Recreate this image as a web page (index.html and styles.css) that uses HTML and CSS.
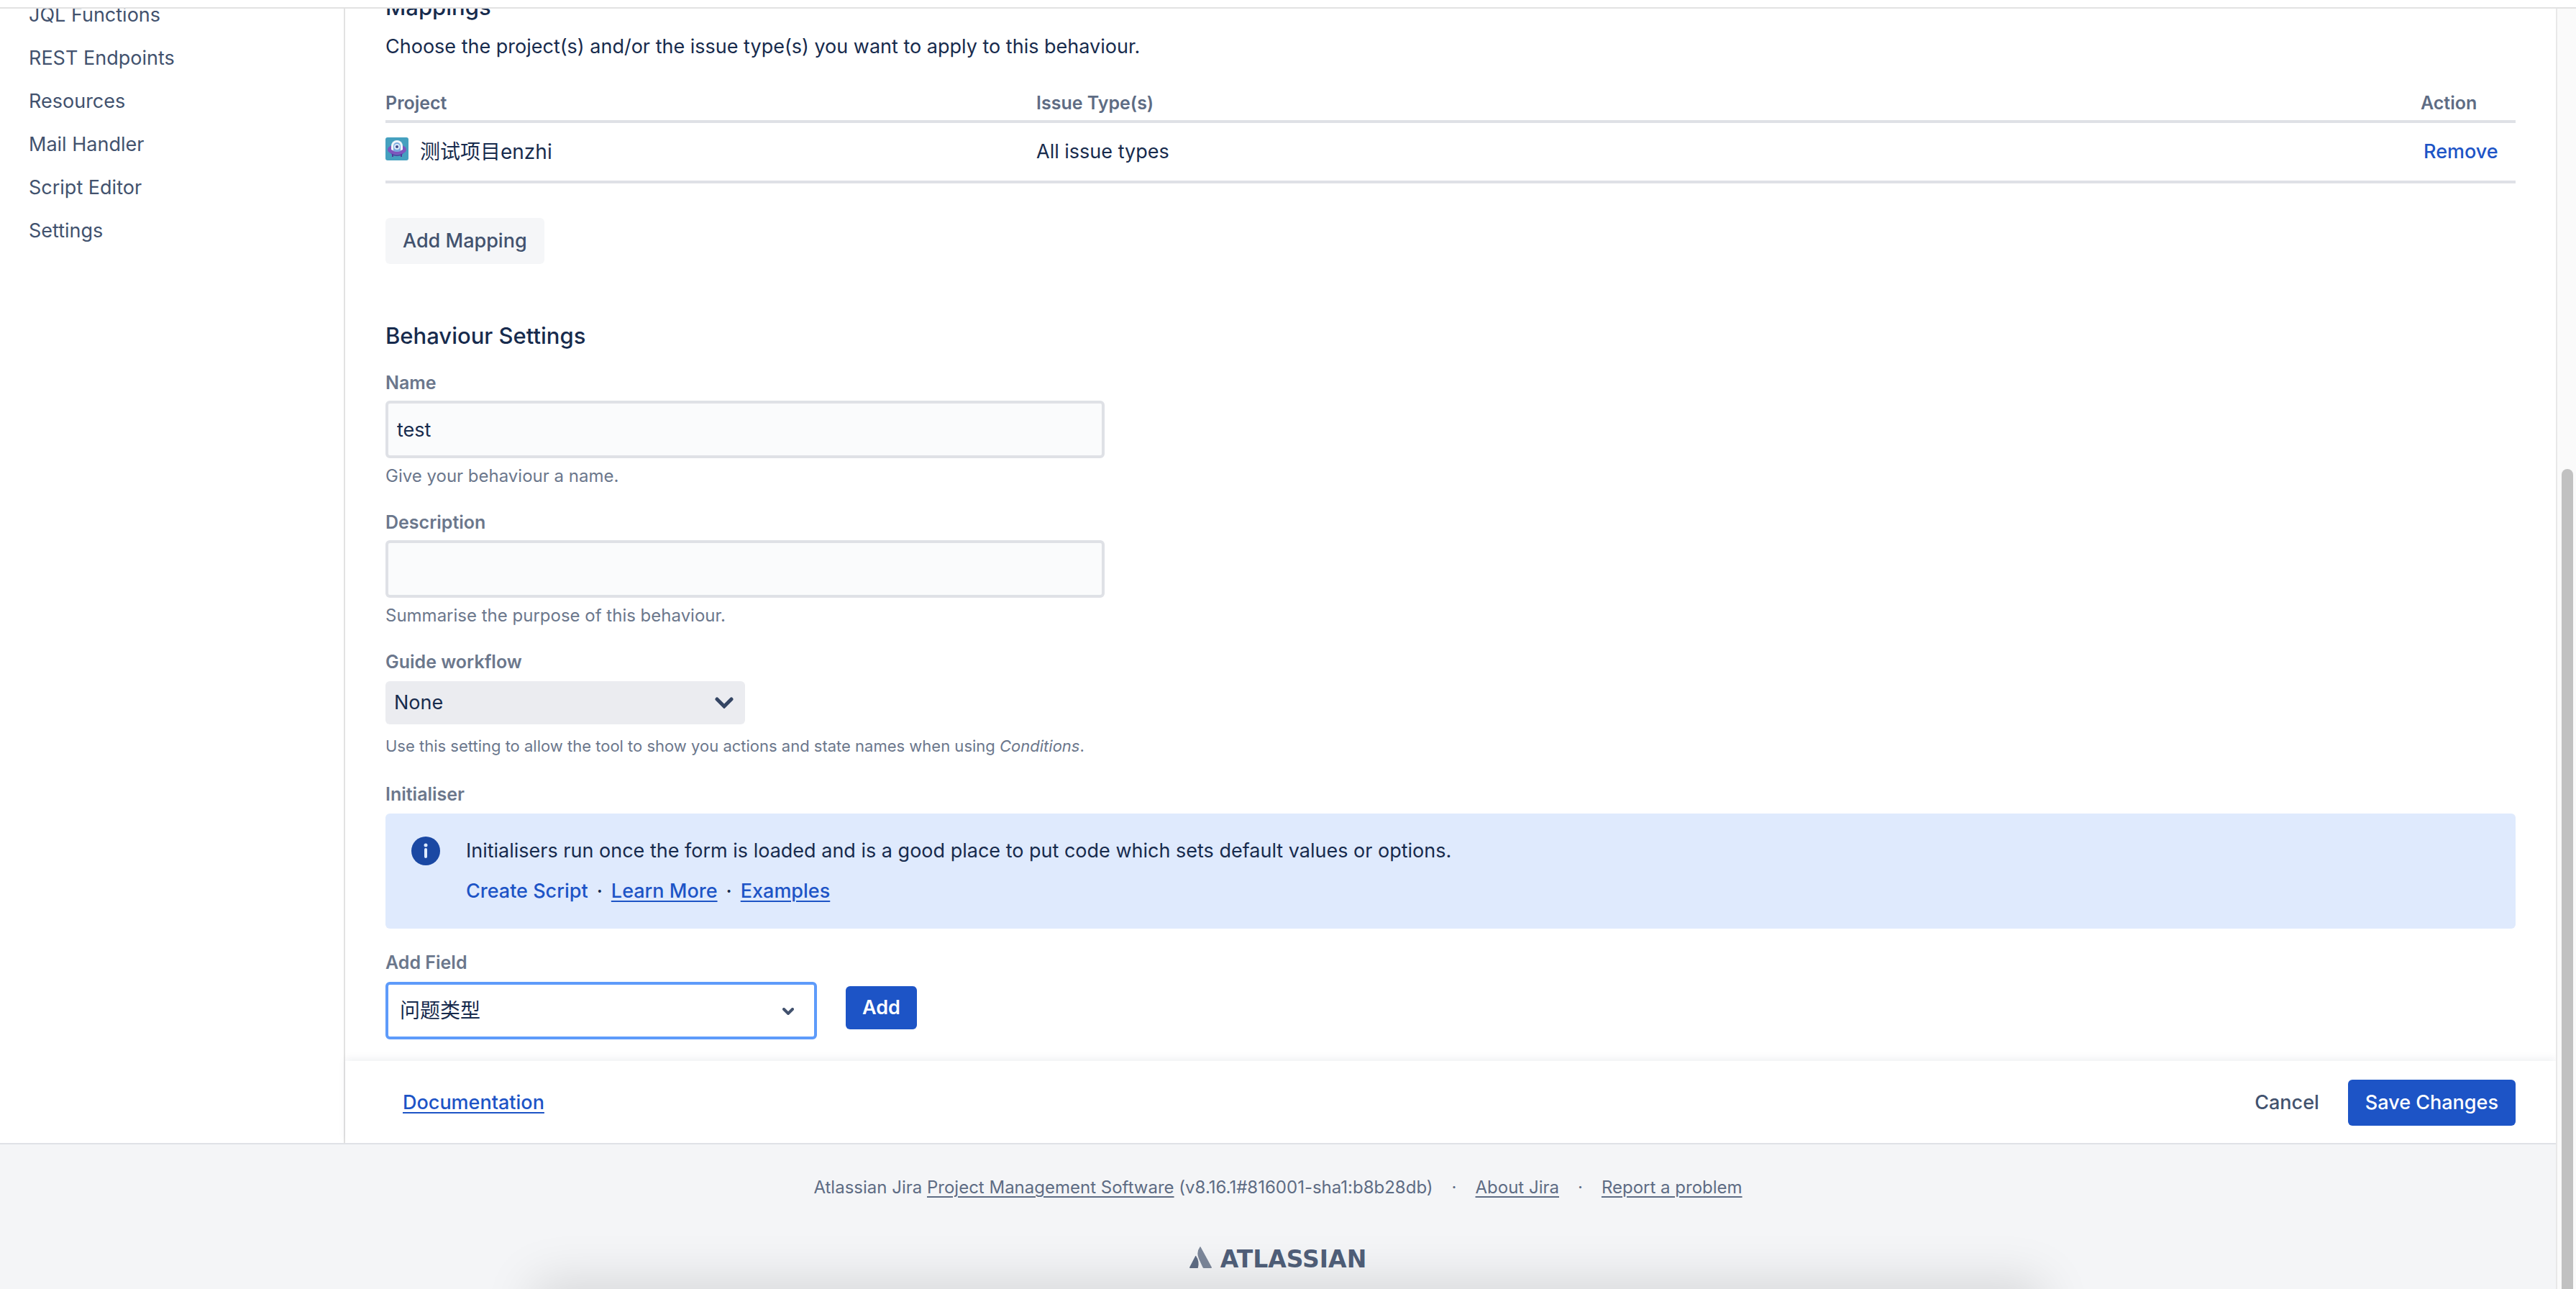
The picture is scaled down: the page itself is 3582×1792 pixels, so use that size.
FILE: index.html
```html
<!DOCTYPE html>
<html lang="en">
<head>
    <meta charset="UTF-8">
    <meta name="viewport" content="width=device-width, initial-scale=1.0">
    <title>Edit Behaviour</title>
    <link rel="stylesheet" href="styles.css">
</head>
<body>
    <div class="topbar"></div>
    <div class="window">
        <div class="page">
            <div class="columns">
                <nav class="sidebar">
                    <a href="#">JQL Functions</a>
                    <a href="#">REST Endpoints</a>
                    <a href="#">Resources</a>
                    <a href="#">Mail Handler</a>
                    <a href="#">Script Editor</a>
                    <a href="#">Settings</a>
                </nav>

                <main class="main">
                    <form class="content" id="behaviour">
                        <h2 class="mappings-title">Mappings</h2>
                        <p class="intro">Choose the project(s) and/or the issue type(s) you want to apply to this behaviour.</p>

                        <table class="mappings">
                            <thead>
                                <tr>
                                    <th class="col-project">Project</th>
                                    <th>Issue Type(s)</th>
                                    <th class="col-action">Action</th>
                                </tr>
                            </thead>
                            <tbody>
                                <tr>
                                    <td>
                                        <div class="project">
                                            <svg class="avatar" viewBox="0 0 32 32">
                                                <rect width="32" height="32" rx="3" fill="#45a0bf"/>
                                                <path d="M10 22v5M22 22v5" stroke="#50389a" stroke-width="2"/>
                                                <path d="M6 20q10 9 20 0l-3 4q-7 4-14 0z" fill="#50389a"/>
                                                <ellipse cx="16" cy="17" rx="13" ry="7" fill="#7e55bd"/>
                                                <path d="M8 17V12a8 8 0 0 1 16 0v5q-8 5-16 0z" fill="#f1f5fa"/>
                                                <path d="M11 19v-7a5 5 0 0 1 10 0v7q-5 2-10 0z" fill="#7aabdf"/>
                                                <circle cx="16" cy="13" r="4" fill="#dcebfa"/>
                                                <circle cx="16" cy="13" r="2" fill="#3f4a8a"/>
                                            </svg>
                                            <span>测试项目enzhi</span>
                                        </div>
                                    </td>
                                    <td>All issue types</td>
                                    <td class="col-action"><button type="button" class="link-btn">Remove</button></td>
                                </tr>
                            </tbody>
                        </table>

                        <button type="button" class="btn">Add Mapping</button>

                        <h2 class="settings-title">Behaviour Settings</h2>

                        <div class="field">
                            <label for="name">Name</label>
                            <input type="text" id="name" value="test">
                            <p class="help">Give your behaviour a name.</p>
                        </div>
                        <div class="field">
                            <label for="description">Description</label>
                            <input type="text" id="description">
                            <p class="help">Summarise the purpose of this behaviour.</p>
                        </div>
                        <div class="field">
                            <label for="workflow">Guide workflow</label>
                            <div class="select workflow">
                                <select id="workflow"><option>None</option></select>
                                <svg class="arrow" viewBox="0 0 26 16"><path d="M3 3l10 10L23 3" fill="none" stroke="#344563" stroke-width="5" stroke-linecap="round"/></svg>
                            </div>
                            <p class="help small">Use this setting to allow the tool to show you actions and state names when using <em>Conditions</em>.</p>
                        </div>
                        <div class="field">
                            <h3 class="label">Initialiser</h3>
                            <div class="info">
                                <svg class="info-icon" viewBox="0 0 40 40">
                                    <circle cx="20" cy="20" r="20" fill="#1a48a3"/>
                                    <circle cx="20" cy="12" r="2.500" fill="#deebff"/>
                                    <path d="M20 18v10" stroke="#deebff" stroke-width="4" stroke-linecap="round"/>
                                </svg>
                                <div>
                                    <p>Initialisers run once the form is loaded and is a good place to put code which sets default values or options.</p>
                                    <p class="info-links">
                                        <button type="button" class="link-btn">Create Script</button>
                                        <span>·</span>
                                        <a href="#">Learn More</a>
                                        <span>·</span>
                                        <a href="#">Examples</a>
                                    </p>
                                </div>
                            </div>
                        </div>
                        <div class="field">
                            <label for="add-field">Add Field</label>
                            <div class="add-row">
                                <div class="select picker">
                                    <select id="add-field"><option>问题类型</option></select>
                                    <svg class="arrow" viewBox="0 0 16 10"><path d="M2 2l6 6 6-6" fill="none" stroke="#42526e" stroke-width="4" stroke-linecap="round"/></svg>
                                </div>
                                <button type="button" class="btn primary add">Add</button>
                            </div>
                        </div>
                    </form>

                    <div class="actions">
                        <a href="#">Documentation</a>
                        <div class="actions-right">
                            <button type="button" class="btn plain">Cancel</button>
                            <button type="submit" form="behaviour" class="btn primary">Save Changes</button>
                        </div>
                    </div>
                </main>
            </div>

            <footer class="footer">
                <ul class="footer-links">
                    <li>Atlassian Jira <a href="#">Project Management Software</a> (v8.16.1#816001-sha1:b8b28db)</li>
                    <li>·</li>
                    <li><a href="#">About Jira</a></li>
                    <li>·</li>
                    <li><a href="#">Report a problem</a></li>
                </ul>
                <div class="logo">
                    <svg class="logo-mark" viewBox="0 0 31 30">
                        <path d="M9 13Q14 20 12 29q0 1-1 1H1q-1 0-1-1L8 13.500q.5-1 1-.5z" fill="#5e6c84"/>
                        <path d="M14.500.5q.5-1 1 0L31 29q0 1-1 1H20q-1 0-1.500-1L13 17Q9 8 14.500.5z" fill="#7c879a"/>
                    </svg>
                    <span>ATLASSIAN</span>
                </div>
            </footer>
        </div>

        <div class="scroll-track">
            <div class="scroll-thumb"></div>
        </div>
    </div>
    <div class="dock-shadow"></div>
</body>
</html>
```

FILE: styles.css
```css
* {
    box-sizing: border-box;
}
body {
    margin: 0;
    height: 100vh;
    display: flex;
    flex-direction: column;
    overflow: hidden;
    position: relative;
    background: white;
    color: #172b4d;
    font-family: Inter, "Noto Sans CJK SC", sans-serif;
    font-size: 27px;
    line-height: 40px;
}
h2, h3, p, ul {
    margin: 0;
    padding: 0;
}
a {
    color: #1d54c6;
    text-underline-offset: 4px;
    text-decoration-thickness: 2px;
}
button, input, select {
    font: inherit;
    color: inherit;
    margin: 0;
}
.topbar {
    flex: none;
    height: 12px;
    background: white;
    border-bottom: 2px solid #e2e2e2;
}
.window {
    flex: 1;
    min-height: 0;
    display: flex;
    overflow: hidden;
}
.page {
    flex: 1;
    display: flex;
    flex-direction: column;
}
.columns {
    flex: none;
    display: flex;
}
.sidebar {
    width: 480px;
    flex: none;
    display: flex;
    flex-direction: column;
    gap: 20px;
    margin-top: -11px;
    padding: 0 40px;
    border-right: 2px solid #e2e2e2;
}
.sidebar a {
    color: #42526e;
    text-decoration: none;
}
.main {
    flex: 1;
    min-width: 0;
}
.content {
    padding: 0 56px;
}
h2 {
    font-size: 31px;
    font-weight: 500;
}
.mappings-title {
    margin-top: -22px;
}
.intro {
    margin-top: 15px;
}
.mappings {
    width: 100%;
    margin-top: 38px;
    border-spacing: 0;
    text-align: left;
}
.mappings th {
    padding: 0 0 4px;
    font-size: 25px;
    font-weight: 600;
    color: #5e6c84;
    border-bottom: 4px solid #dfe1e6;
}
.mappings td {
    padding: 20px 0;
    border-bottom: 4px solid #dfe1e6;
}
.col-project {
    width: 905px;
}
.mappings .col-action {
    width: 132px;
}
.project {
    display: flex;
    gap: 16px;
    font-size: 28px;
}
.avatar {
    width: 32px;
    height: 32px;
}
.link-btn {
    padding: 0;
    border: 0;
    background: none;
    color: #1d54c6;
    font-weight: 500;
}
td .link-btn {
    padding: 0 4px;
}
.btn {
    padding: 12px 24px;
    border: 0;
    border-radius: 6px;
    background: #f5f6f8;
    color: #42526e;
    font-weight: 500;
}
.btn.primary {
    background: #1d54c6;
    color: white;
}
.btn.plain {
    background: none;
}
.mappings + .btn {
    display: block;
    margin-top: 48px;
}
.settings-title {
    margin: 80px 0 28px;
}
.field {
    margin-bottom: 30px;
}
.field label,
.field .label {
    display: block;
    margin-bottom: 8px;
    font-size: 25px;
    font-weight: 600;
    line-height: 34px;
    color: #6b778c;
}
.field input {
    display: block;
    width: 1000px;
    height: 80px;
    padding: 0 12px;
    border: 4px solid #dfe1e6;
    border-radius: 6px;
    background: #fafbfc;
}
.help {
    margin-top: 8px;
    font-size: 24px;
    line-height: 34px;
    color: #6b778c;
}
.help.small {
    margin-top: 10px;
    font-size: 22px;
    line-height: 40px;
}
.select,
.info {
    margin-top: 10px;
}
.select {
    position: relative;
}
.select select {
    appearance: none;
    display: block;
    width: 100%;
    border-radius: 6px;
}
.arrow {
    position: absolute;
    pointer-events: none;
}
.workflow {
    width: 500px;
}
.workflow select {
    height: 60px;
    padding: 0 12px;
    border: 0;
    background: #ebecf0;
}
.workflow .arrow {
    width: 26px;
    right: 16px;
    top: 22px;
}
.picker {
    width: 600px;
    margin-top: 0;
}
.picker select {
    height: 80px;
    padding: 0 16px;
    border: 4px solid #5e9bfa;
    background: white;
    font-size: 28px;
}
.picker .arrow {
    width: 16px;
    right: 32px;
    top: 36px;
}
.info {
    display: flex;
    gap: 36px;
    padding: 32px 36px;
    min-height: 160px;
    border-radius: 6px;
    background: #dfeafd;
}
.info-icon {
    width: 40px;
    height: 40px;
    flex: none;
}
.info-links {
    display: flex;
    gap: 12px;
    margin-top: 16px;
    font-weight: 500;
}
.add-row {
    display: flex;
    align-items: flex-start;
    gap: 40px;
    margin-top: 10px;
}
.add {
    margin-top: 6px;
    padding: 10px 23px;
    font-weight: 600;
}
.actions {
    display: flex;
    align-items: center;
    justify-content: space-between;
    padding: 26px 56px 24px 80px;
    background: white;
    box-shadow: 0 -4px 10px rgba(9, 30, 66, 0.06);
    font-weight: 500;
}
.actions-right {
    display: flex;
    gap: 16px;
}
.footer {
    flex: 1;
    border-top: 2px solid #dfe1e6;
    background: #f4f5f7;
    color: #5e6c84;
    font-size: 24px;
}
.footer-links {
    display: flex;
    justify-content: center;
    gap: 26px;
    margin-top: 40px;
    list-style: none;
}
.footer-links a {
    color: inherit;
}
.logo {
    display: flex;
    justify-content: center;
    gap: 12px;
    margin-top: 60px;
    font-family: "DejaVu Sans", sans-serif;
    font-size: 33px;
    font-weight: 700;
    color: #505f79;
}
.logo-mark {
    width: 31px;
    height: 30px;
    margin-top: 2px;
}
.scroll-track {
    width: 28px;
    flex: none;
    padding-left: 6px;
    padding-top: 640px;
    border-left: 2px solid #e8e8e8;
    background: #fafafa;
}
.scroll-thumb {
    width: 16px;
    height: 100%;
    border-radius: 8px 8px 0 0;
    background: #c1c1c1;
}
/* shadow cast by what sits below the window */
.dock-shadow {
    position: absolute;
    left: 21%;
    right: 21%;
    bottom: -60px;
    height: 60px;
    box-shadow: 0 0 70px 10px rgba(0, 0, 0, 0.13);
    pointer-events: none;
}
```
